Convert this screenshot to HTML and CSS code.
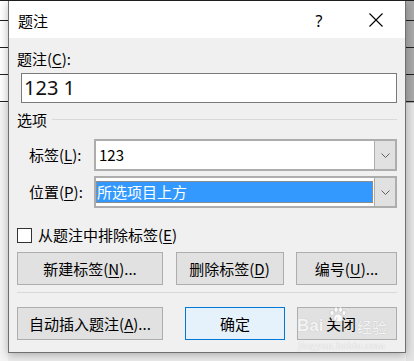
FILE: index.html
```html
<!DOCTYPE html>
<html>
  <head>
    <title>题注</title>
    <meta charset="utf-8" />
    <meta name="viewport" content="width=device-width, initial-scale=1.0" />
    <link rel="stylesheet" href="styles.css">
  </head>
  <body>
    <div class="dialog">
      <div class="titlebar">
        <span class="title">题注</span>
        <span class="tb-btn help">?</span>
        <span class="tb-btn close">
          <svg width="14" height="14" viewBox="0 0 14 14"><path d="M0.5 0.5 L13.5 13.5 M13.5 0.5 L0.5 13.5" stroke="#000" stroke-width="1.1" fill="none"/></svg>
        </span>
      </div>
      <div class="content">
        <div class="field-label">题注(<u>C</u>):</div>
        <div class="caption-input">123 1</div>

        <div class="group-head"><span>选项</span><span class="group-line"></span></div>
        <div class="options">
          <span class="opt-label">标签(<u>L</u>):</span>
          <div class="combo">
            <span class="combo-value">123</span>
            <span class="combo-arrow"><svg width="9" height="5" viewBox="0 0 9 5"><path d="M0.5 0.5 L4.5 4.5 L8.5 0.5" stroke="#606060" fill="none"/></svg></span>
          </div>
          <span class="opt-label">位置(<u>P</u>):</span>
          <div class="combo">
            <span class="combo-value"><span class="selected">所选项目上方</span></span>
            <span class="combo-arrow"><svg width="9" height="5" viewBox="0 0 9 5"><path d="M0.5 0.5 L4.5 4.5 L8.5 0.5" stroke="#606060" fill="none"/></svg></span>
          </div>
        </div>

        <div class="check-row"><span class="checkbox"></span><span>从题注中排除标签(<u>E</u>)</span></div>

        <div class="btn-row">
          <span class="btn w146">新建标签(<u>N</u>)...</span>
          <span class="btn w108">删除标签(<u>D</u>)</span>
          <span class="btn w101">编号(<u>U</u>)...</span>
        </div>
        <div class="sep"></div>
        <div class="btn-row bottom">
          <span class="btn w146">自动插入题注(<u>A</u>)...</span>
          <span class="btn default w100">确定</span>
          <span class="btn w100 last">关闭</span>
        </div>
      </div>

      <!-- baidu jingyan watermark over the close button -->
      <span class="wm wm-bai">Bai</span>
      <svg class="wm wm-paw" width="18" height="16" viewBox="0 0 18 16">
        <g fill="rgba(255,255,255,0.85)" stroke="rgba(190,190,190,0.7)" stroke-width="0.8">
          <ellipse cx="3" cy="6" rx="2" ry="2.6"/>
          <ellipse cx="7" cy="2.8" rx="2" ry="2.5"/>
          <ellipse cx="11.5" cy="2.8" rx="2" ry="2.5"/>
          <ellipse cx="15" cy="6" rx="2" ry="2.6"/>
          <path d="M9 7 C5.5 7 4 11 5 13.5 C6 15.5 12 15.5 13 13.5 C14 11 12.5 7 9 7 Z"/>
        </g>
      </svg>
      <span class="wm wm-cn">经验</span>
      <span class="wm wm-url">jingyan.baidu.com</span>
    </div>
  </body>
</html>
```

FILE: styles.css
```css
body {
  margin: 0;
  height: 361px;
  overflow: hidden;
  font-family: "Noto Sans CJK SC", "Noto Sans", sans-serif;
  color: #000;
  background:
    linear-gradient(#202020, #202020) 0 0 / 100% 1px no-repeat,
    repeating-linear-gradient(to bottom, transparent 0 20px, #202020 20px 21px, transparent 21px 27px) 0 0 / 100% 103px no-repeat,
    linear-gradient(to right, #fff 0 8px, transparent 8px 406px, #a9a9a9 406px) 0 0 / 100% 103px no-repeat,
    linear-gradient(to right, #f4f4f4 0 8px, transparent 8px 406px, #e4e4e4 406px) 0 103px / 100% 100% no-repeat,
    #ededed;
}
.dialog {
  position: relative;
  box-sizing: border-box;
  width: 398px;
  height: 352px;
  margin: 1px 0 0 8px;
  background: #f0f0f0;
  border: 1px solid #6f6f6f;
  border-top: none;
  box-shadow: 0 2px 9px rgba(0, 0, 0, 0.28);
}
.titlebar {
  display: flex;
  align-items: center;
  height: 37px;
  background: #fff;
  padding-left: 9px;
}
.title {
  flex: 1;
  font-size: 15px;
  line-height: 20px;
  padding-top: 2px;
}
.tb-btn {
  display: flex;
  align-items: center;
  justify-content: center;
  height: 37px;
}
.help {
  width: 46px;
  margin-right: 11px;
  font-family: "Noto Sans", sans-serif;
  font-size: 16px;
  padding-top: 2px;
}
.close {
  width: 46px;
  margin-right: 6px;
}
.content {
  padding: 11px 8px 0 8px;
  font-size: 15px;
  line-height: 20px;
}
u {
  text-decoration-thickness: 1px;
  text-underline-offset: 2px;
}
.caption-input {
  box-sizing: border-box;
  height: 30px;
  margin: 4px 0 0 4px;
  padding-left: 2px;
  background: #fff;
  border: 1px solid #7a7a7a;
  font-family: "Noto Sans", sans-serif;
  font-size: 20px;
  line-height: 28px;
  color: #111;
}
.group-head {
  display: flex;
  align-items: center;
  margin-top: 7px;
}
.group-line {
  flex: 1;
  height: 1px;
  margin: 0 0 2px 5px;
  background: #d9d9d9;
}
.options {
  display: grid;
  grid-template-columns: 65px 1fr;
  row-gap: 5px;
  align-items: center;
  margin: 9px 0 0 12px;
}
.combo {
  display: flex;
  box-sizing: border-box;
  height: 32px;
  background: #fff;
  border: 2px solid #adadad;
}
.combo-value {
  flex: 1;
  display: flex;
  align-items: center;
  padding-left: 3px;
}
.combo-value .selected {
  display: flex;
  align-items: center;
  align-self: stretch;
  flex: 1;
  margin: 3px 1px 3px -3px;
  padding-left: 1px;
  background: #3399ff;
  color: #fff;
  outline: 1px dotted #d9822b;
  outline-offset: -1px;
}
.combo-arrow {
  display: flex;
  align-items: center;
  justify-content: center;
  width: 20px;
  background: #e1e1e1;
  border-left: 1px solid #adadad;
}
.check-row {
  display: flex;
  align-items: center;
  margin-top: 17px;
}
.checkbox {
  box-sizing: border-box;
  width: 15px;
  height: 15px;
  margin-right: 6px;
  background: #fff;
  border: 1px solid #333;
}
.btn-row {
  display: flex;
  justify-content: space-between;
  margin-top: 7px;
}
.btn-row.bottom {
  justify-content: flex-start;
  margin-top: 14px;
}
.btn {
  box-sizing: border-box;
  display: flex;
  align-items: center;
  justify-content: center;
  height: 33px;
  background: #e1e1e1;
  border: 1px solid #adadad;
}
.w146 { width: 146px; }
.w108 { width: 108px; }
.w101 { width: 101px; }
.w100 { width: 100px; }
.btn.default {
  margin-left: 22px;
  background: #e5f1fb;
  border-color: #0078d7;
}
.btn.last {
  margin-left: 12px;
  padding-right: 12px;
}
.sep {
  height: 1px;
  margin-top: 7px;
  background: #d9d9d9;
}
.wm {
  position: absolute;
  pointer-events: none;
  color: rgba(255, 255, 255, 0.85);
  text-shadow: 0 0 1px rgba(170, 170, 170, 0.8);
}
.wm-bai {
  left: 288px;
  top: 315px;
  font-family: "Liberation Sans", sans-serif;
  font-weight: bold;
  font-size: 17px;
  line-height: 20px;
}
.wm-paw {
  left: 320px;
  top: 306px;
}
.wm-cn {
  left: 348px;
  top: 316px;
  font-size: 15px;
  line-height: 20px;
}
.wm-url {
  left: 289px;
  top: 338px;
  font-family: "Liberation Serif", serif;
  font-size: 11px;
  line-height: 12px;
  letter-spacing: 0.3px;
}
```
